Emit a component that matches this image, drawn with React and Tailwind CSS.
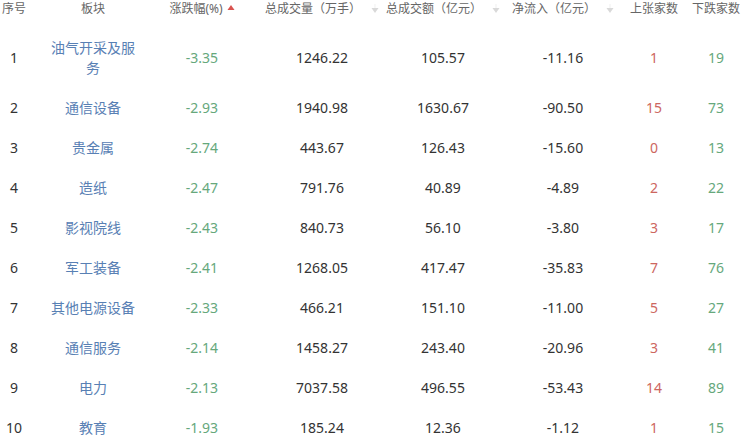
import React from 'react';

const rows = [
    { id: 1, name: '油气开采及服务', pct: '-3.35', vol: '1246.22', amt: '105.57', flow: '-11.16', up: 1, down: 19 },
    { id: 2, name: '通信设备', pct: '-2.93', vol: '1940.98', amt: '1630.67', flow: '-90.50', up: 15, down: 73 },
    { id: 3, name: '贵金属', pct: '-2.74', vol: '443.67', amt: '126.43', flow: '-15.60', up: 0, down: 13 },
    { id: 4, name: '造纸', pct: '-2.47', vol: '791.76', amt: '40.89', flow: '-4.89', up: 2, down: 22 },
    { id: 5, name: '影视院线', pct: '-2.43', vol: '840.73', amt: '56.10', flow: '-3.80', up: 3, down: 17 },
    { id: 6, name: '军工装备', pct: '-2.41', vol: '1268.05', amt: '417.47', flow: '-35.83', up: 7, down: 76 },
    { id: 7, name: '其他电源设备', pct: '-2.33', vol: '466.21', amt: '151.10', flow: '-11.00', up: 5, down: 27 },
    { id: 8, name: '通信服务', pct: '-2.14', vol: '1458.27', amt: '243.40', flow: '-20.96', up: 3, down: 41 },
    { id: 9, name: '电力', pct: '-2.13', vol: '7037.58', amt: '496.55', flow: '-53.43', up: 14, down: 89 },
    { id: 10, name: '教育', pct: '-1.93', vol: '185.24', amt: '12.36', flow: '-1.12', up: 1, down: 15 },
];

// column boxes: centres land at 14, 93, 202, 322, 443, 563, 654, 716
const cols = [
    'w-[47px] pr-[19px]',
    'w-[92px]',
    'w-[126px]',
    'w-[114px]',
    'w-[128px]',
    'w-[112px]',
    'w-[70px]',
    'w-[54px]',
];

const SortUp = () => (
    <svg width="8" height="10" viewBox="0 0 8 10" className="ml-[4px]">
        <path d="M4 1 L7.5 6 L0.5 6 Z" fill="#d9534f" />
    </svg>
);

const SortNone = () => (
    <svg width="8" height="10" viewBox="0 0 8 10" className="ml-[10px]">
        <rect x="3.5" y="0" width="1" height="4" fill="#f0f0f0" />
        <path d="M0.5 4 L7.5 4 L4 9 Z" fill="#d9d9d9" />
    </svg>
);

const Cell = ({ i, className = '', children }) => (
    <div className={`${cols[i]} shrink-0 flex items-center justify-center text-center ${className}`}>
        {children}
    </div>
);

export default function App() {
    return (
        <div
            className="w-[743px] h-[437px] overflow-hidden bg-white text-[#333]"
            style={{ fontFamily: '"Noto Sans", "Noto Sans CJK SC", sans-serif' }}
        >
            {/* header */}
            <div className="flex h-[18px] mb-[10px] text-[12px] leading-[18px] text-[#666] whitespace-nowrap">
                <Cell i={0}>序号</Cell>
                <Cell i={1}>板块</Cell>
                <Cell i={2}>涨跌幅(%)<SortUp /></Cell>
                <Cell i={3}>总成交量（万手）<SortNone /></Cell>
                <Cell i={4}>总成交额（亿元）<SortNone /></Cell>
                <Cell i={5}>净流入（亿元）<SortNone /></Cell>
                <Cell i={6}>上张家数</Cell>
                <Cell i={7}>下跌家数</Cell>
            </div>

            {/* rows */}
            {rows.map((r) => (
                <div key={r.id} className="flex py-[10px] text-[14px] leading-[20px]">
                    <Cell i={0}>{r.id}</Cell>
                    <Cell i={1} className="text-[#5880b4]">{r.name}</Cell>
                    <Cell i={2} className="text-[#66a87c]">{r.pct}</Cell>
                    <Cell i={3}>{r.vol}</Cell>
                    <Cell i={4}>{r.amt}</Cell>
                    <Cell i={5}>{r.flow}</Cell>
                    <Cell i={6} className="text-[#cd6660]">{r.up}</Cell>
                    <Cell i={7} className="text-[#66a87c]">{r.down}</Cell>
                </div>
            ))}
        </div>
    );
}
